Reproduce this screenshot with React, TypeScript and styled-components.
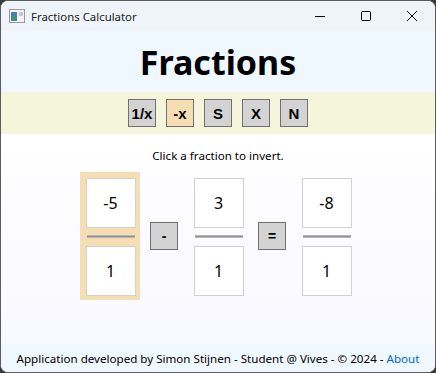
import React from 'react';
import styled, { createGlobalStyle } from 'styled-components';

const GlobalStyle = createGlobalStyle`
  html, body {
    margin: 0;
    padding: 0;
    background: #3a3a3a;
  }
  body {
    font-family: 'Noto Sans', 'Open Sans', sans-serif;
  }
`;

const Window = styled.div`
  box-sizing: border-box;
  width: 436px;
  height: 373px;
  border: 1px solid #5c5c5c;
  border-radius: 8px;
  overflow: hidden;
  display: flex;
  flex-direction: column;
  background: #f8f8ff;
`;

const TitleBar = styled.div`
  height: 30px;
  flex: none;
  display: flex;
  align-items: center;
  background: #eef4f9;
  font-size: 11.4px;
  color: #1a1a1a;
`;

const TitleIcon = styled.div`
  display: flex;
  margin: 0 6px 0 8px;
`;

const TitleText = styled.span`
  flex: 1;
`;

const Control = styled.div`
  width: 46px;
  height: 30px;
  display: flex;
  align-items: center;
  justify-content: center;
`;

const Header = styled.div`
  height: 61px;
  flex: none;
  display: flex;
  align-items: center;
  justify-content: center;
  background: #f0f8ff;
`;

const Title = styled.h1`
  margin: 0;
  font-family: 'Noto Sans', sans-serif;
  font-weight: 700;
  font-size: 34px;
  color: #000;
`;

const Toolbar = styled.div`
  height: 42px;
  flex: none;
  display: flex;
  align-items: center;
  justify-content: center;
  gap: 10px;
  background: #f5f5dc;
`;

const ToolButton = styled.div<{ $active?: boolean }>`
  box-sizing: border-box;
  min-width: 28px;
  height: 28px;
  padding: 0 1px;
  display: flex;
  align-items: center;
  justify-content: center;
  border: 1px solid #707070;
  background: ${(p) => (p.$active ? '#f5deb3' : '#d3d3d3')};
  font-family: 'Liberation Sans', Arial, sans-serif;
  font-weight: 700;
  font-size: 15px;
  color: #000;
`;

const Content = styled.div`
  flex: 1;
  display: flex;
  flex-direction: column;
  align-items: center;
  background: linear-gradient(#ffffff, #f8f8ff);
`;

const Hint = styled.p`
  margin: 14px 0 9px;
  font-size: 11.6px;
  color: #000;
`;

const Row = styled.div`
  display: flex;
  align-items: center;
  gap: 10px;
`;

const FractionPanel = styled.div<{ $selected?: boolean }>`
  width: 60px;
  height: 128px;
  box-sizing: border-box;
  padding: 6px 5px 4px 6px;
  display: flex;
  flex-direction: column;
  align-items: center;
  background: ${(p) => (p.$selected ? '#f5deb3' : 'transparent')};
`;

const NumberBox = styled.div`
  box-sizing: border-box;
  width: 50px;
  height: 50px;
  display: flex;
  align-items: center;
  justify-content: center;
  border: 1px solid #d0d0d0;
  background: #fff;
  font-size: 16px;
  color: #000;
`;

const Bar = styled.div`
  width: 48px;
  height: 3px;
  margin: 7px 0 8px;
  background: #8f8f8f;
  border-top: 1px solid #b8b8b8;
  border-bottom: 1px solid #b8b8b8;
  box-sizing: border-box;
`;

const OpButton = styled(ToolButton)`
  width: 28px;
  height: 28px;
  font-size: 14px;
`;

const Footer = styled.div`
  height: 28px;
  flex: none;
  display: flex;
  align-items: center;
  justify-content: center;
  background: #f0f8ff;
  font-size: 11.6px;
  color: #000;
`;

const Link = styled.span`
  color: #0066cc;
`;

const Fraction = ({ num, den, selected }: { num: string; den: string; selected?: boolean }) => (
  <FractionPanel $selected={selected}>
    <NumberBox>{num}</NumberBox>
    <Bar />
    <NumberBox>{den}</NumberBox>
  </FractionPanel>
);

const App = () => {
  return (
    <>
      <GlobalStyle />
      <Window>
        <TitleBar>
          <TitleIcon>
            <svg width="16" height="14" viewBox="0 0 16 14">
              <rect x="0.5" y="0.5" width="15" height="13" fill="#f4f4f4" stroke="#9a9a9a" />
              <rect x="2" y="3" width="6" height="9" fill="#3f8f7f" />
              <rect x="2" y="3" width="6" height="4" fill="#4a7fb0" />
              <rect x="10" y="3" width="4" height="4" fill="#c8c8c8" />
            </svg>
          </TitleIcon>
          <TitleText>Fractions Calculator</TitleText>
          <Control>
            <svg width="10" height="10" viewBox="0 0 10 10">
              <line x1="0" y1="5.5" x2="10" y2="5.5" stroke="#000" strokeWidth="1" />
            </svg>
          </Control>
          <Control>
            <svg width="10" height="10" viewBox="0 0 10 10">
              <rect x="0.5" y="0.5" width="9" height="9" rx="1" fill="none" stroke="#000" strokeWidth="1" />
            </svg>
          </Control>
          <Control>
            <svg width="10" height="10" viewBox="0 0 10 10">
              <path d="M0 0 L10 10 M10 0 L0 10" stroke="#000" strokeWidth="1" />
            </svg>
          </Control>
        </TitleBar>
        <Header>
          <Title>Fractions</Title>
        </Header>
        <Toolbar>
          <ToolButton>1/x</ToolButton>
          <ToolButton $active>-x</ToolButton>
          <ToolButton>S</ToolButton>
          <ToolButton>X</ToolButton>
          <ToolButton>N</ToolButton>
        </Toolbar>
        <Content>
          <Hint>Click a fraction to invert.</Hint>
          <Row>
            <Fraction num="-5" den="1" selected />
            <OpButton>-</OpButton>
            <Fraction num="3" den="1" />
            <OpButton>=</OpButton>
            <Fraction num="-8" den="1" />
          </Row>
        </Content>
        <Footer>
          <span>
            Application developed by Simon Stijnen - Student @ Vives - © 2024 - <Link>About</Link>
          </span>
        </Footer>
      </Window>
    </>
  );
};

export default App;
